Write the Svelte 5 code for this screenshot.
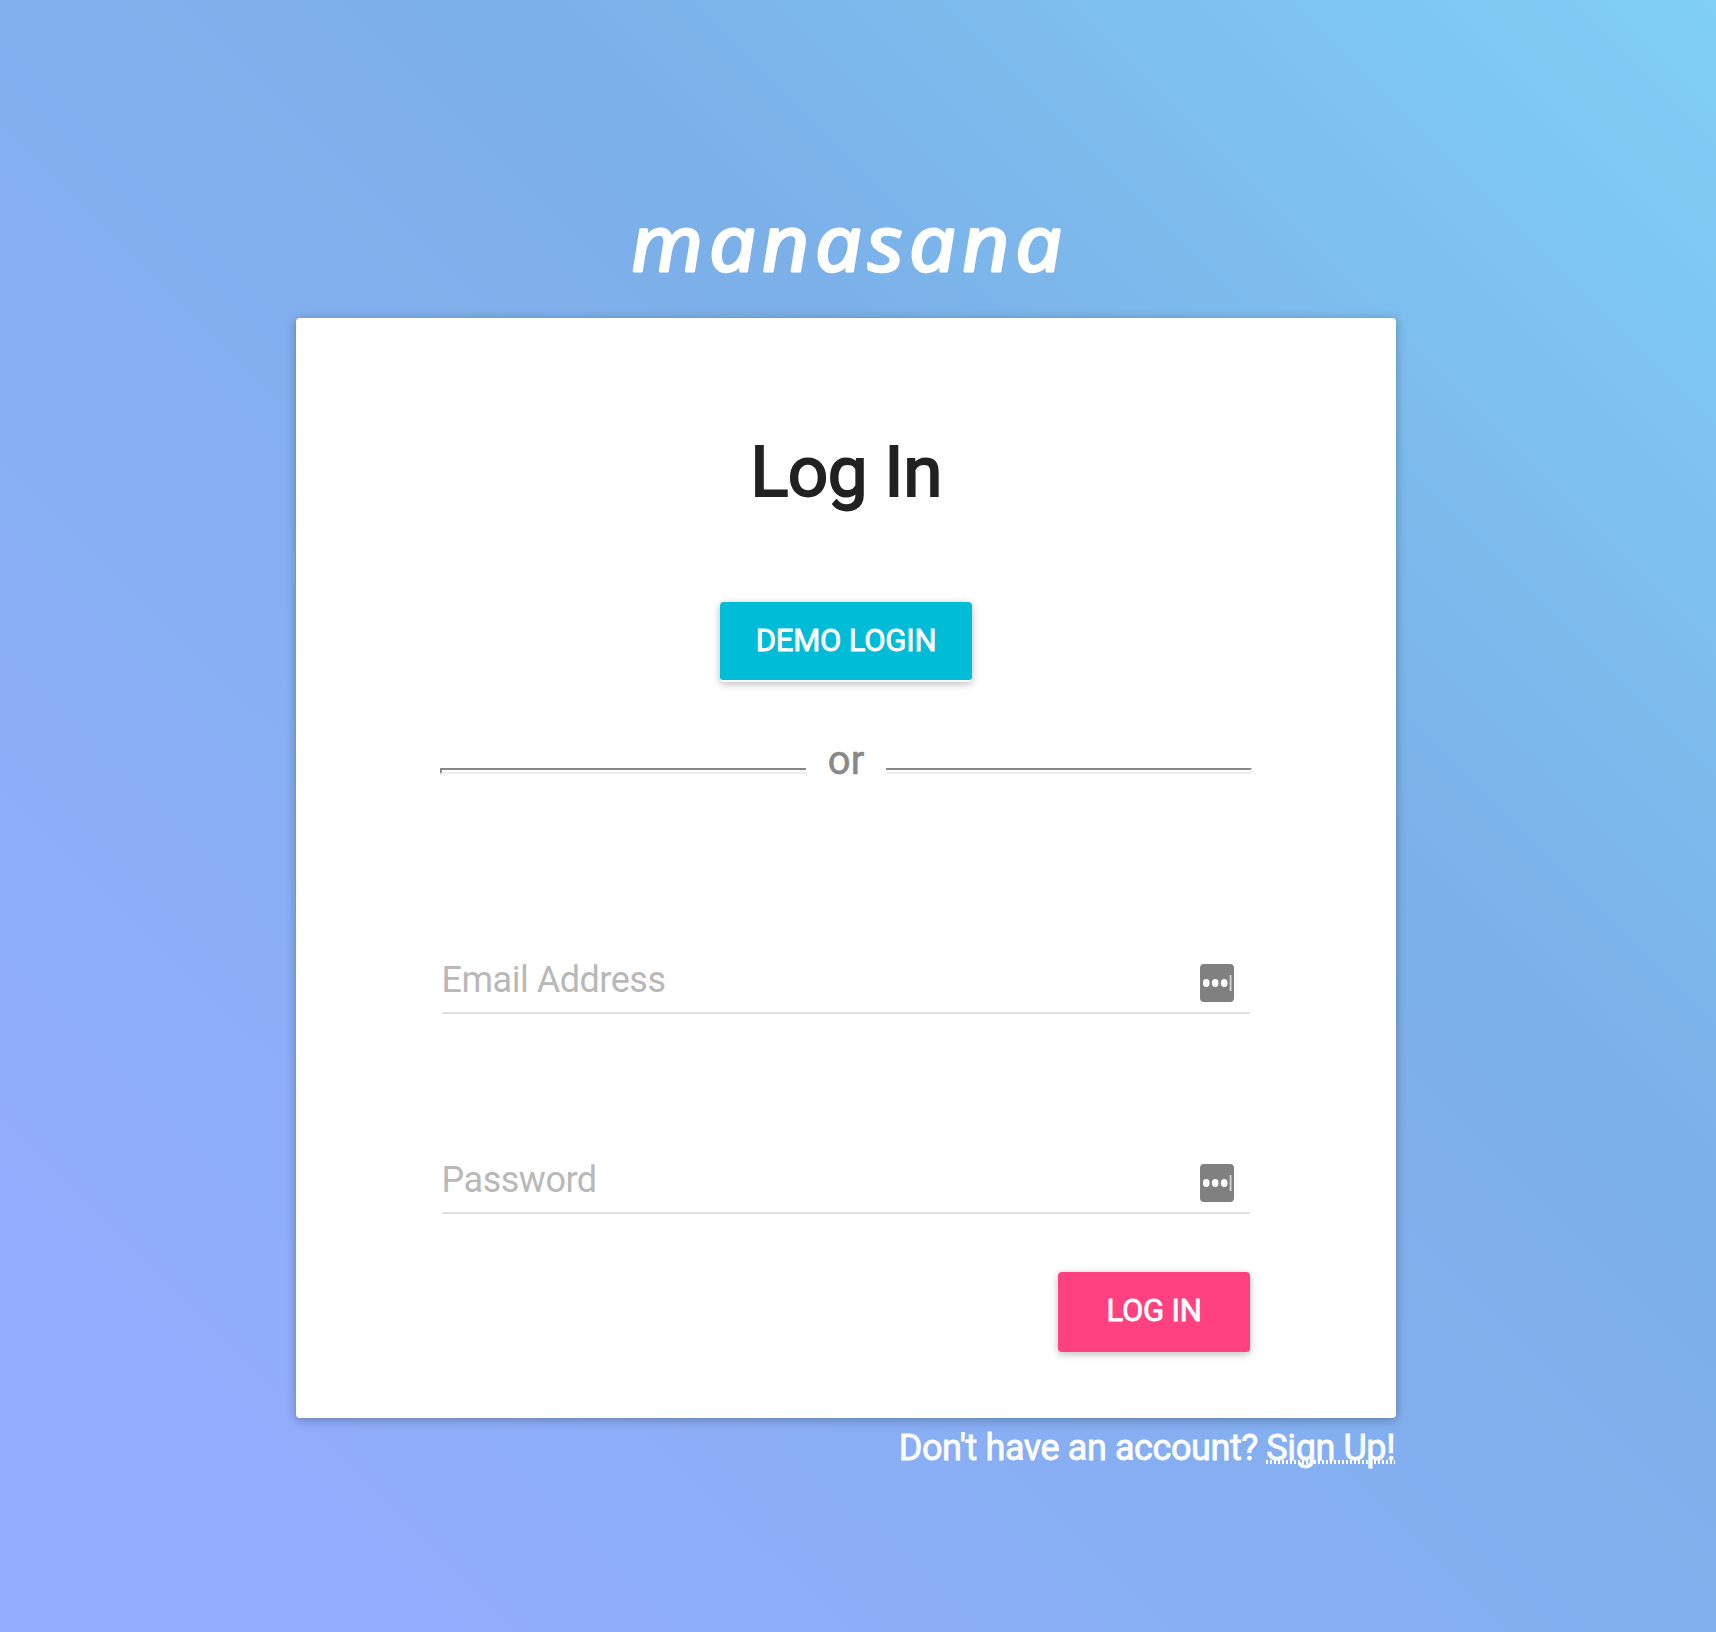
<script>
  let email = $state('');
  let password = $state('');
</script>

{#snippet keyIcon()}
  <svg class="key" viewBox="0 0 34 38" width="34" height="38" aria-hidden="true">
    <rect width="34" height="38" rx="4" fill="#808080" />
    <ellipse cx="6.2" cy="19" rx="3.3" ry="4" fill="#fff" />
    <ellipse cx="15.2" cy="19" rx="3.3" ry="4" fill="#fff" />
    <ellipse cx="24.2" cy="19" rx="3.3" ry="4" fill="#fff" />
    <rect x="29.7" y="11" width="1.8" height="16" fill="#d4d4d4" />
  </svg>
{/snippet}

<main class="page">
  <div class="logo">
    <svg viewBox="0 0 460 130" width="460" height="130">
      <text transform="translate(16 93) skewX(4)" textLength="437" lengthAdjust="spacingAndGlyphs">manasana</text>
    </svg>
  </div>
  <form class="card" onsubmit={(e) => e.preventDefault()}>
    <h1>Log In</h1>
    <button type="button" class="btn demo">DEMO LOGIN</button>
    <div class="divider">
      <span class="rule left"></span>
      <span class="or">or</span>
      <span class="rule right"></span>
    </div>
    <label class="field email">
      <input type="text" placeholder="Email Address" bind:value={email} />
      {@render keyIcon()}
    </label>
    <label class="field password">
      <input type="password" placeholder="Password" bind:value={password} />
      {@render keyIcon()}
    </label>
    <button type="submit" class="btn submit">LOG IN</button>
  </form>
  <p class="signup">Don't have an account? <a href="#signup">Sign Up!</a></p>
</main>

<style>
  .page {
    box-sizing: border-box;
    width: 1716px;
    height: 1632px;
    padding: 0 320px 0 296px;
    overflow: hidden;
    display: flex;
    flex-direction: column;
    font-family: Roboto, sans-serif;
    background: linear-gradient(45deg, #94adff 0%, #94adff 9%, #7bb0e8 64%, #80cff6 100%);
  }
  .logo {
    flex: none;
    box-sizing: border-box;
    height: 318px;
    padding-top: 178px;
    display: flex;
    justify-content: center;
    align-items: flex-start;
  }
  .logo text {
    font: italic 400 77px 'Open Sans', sans-serif;
    letter-spacing: 5px;
    fill: #fff;
    stroke: #fff;
    stroke-width: 3px;
    stroke-linejoin: round;
  }
  .card {
    box-sizing: border-box;
    flex: none;
    width: 1100px;
    height: 1100px;
    padding: 106px 144px 0;
    display: flex;
    flex-direction: column;
    background: #fff;
    border-radius: 4px;
    box-shadow: 0 2px 12px rgba(0, 0, 0, 0.18), 0 2px 8px rgba(0, 0, 0, 0.12);
  }
  h1 {
    margin: 0;
    text-align: center;
    font-size: 71px;
    font-weight: 400;
    line-height: 96px;
    letter-spacing: -0.5px;
    color: #212121;
    -webkit-text-stroke: 2px #212121;
  }
  .btn {
    box-sizing: border-box;
    height: 80px;
    padding: 0;
    border: 0;
    border-radius: 4px;
    font: 400 31px/78px Roboto, sans-serif;
    letter-spacing: -0.2px;
    color: #fff;
    -webkit-text-stroke: 0.8px #fff;
    box-shadow: 0 2px 10px rgba(0, 0, 0, 0.16), 0 2px 6px rgba(0, 0, 0, 0.12);
  }
  .demo {
    align-self: center;
    width: 252px;
    margin-top: 82px;
    border-bottom: 2px solid #fff;
    background: #00bcd7;
    background-clip: padding-box;
  }
  .divider {
    display: flex;
    justify-content: space-between;
    margin-top: 54px;
    height: 50px;
  }
  .rule {
    box-sizing: border-box;
    width: 366px;
    height: 6px;
    margin-top: 32px;
    border: 0 solid;
    border-top: 2px solid #888;
    border-bottom: 2px solid #eee;
  }
  .rule.left {
    border-left: 2px solid #888;
  }
  .rule.right {
    border-right: 2px solid #eee;
  }
  .or {
    font-size: 40px;
    line-height: 50px;
    color: #888;
    -webkit-text-stroke: 0.6px #888;
  }
  .field {
    box-sizing: border-box;
    display: flex;
    align-items: flex-start;
    width: 808px;
    height: 60px;
    margin-left: 2px;
    border-bottom: 2px solid #e0e0e0;
  }
  .email {
    margin-top: 168px;
  }
  .password {
    margin-top: 140px;
  }
  input {
    flex: 1;
    min-width: 0;
    height: 52px;
    padding: 0;
    border: 0;
    outline: 0;
    background: transparent;
    font: 400 36px/52px Roboto, sans-serif;
    letter-spacing: -0.48px;
    text-indent: -0.5px;
    color: #212121;
  }
  input::placeholder {
    color: #b8b8b8;
    opacity: 1;
  }
  .key {
    flex: none;
    margin: 10px 16px 0 0;
  }
  .submit {
    align-self: flex-end;
    width: 192px;
    margin: 58px 2px 0 0;
    padding-bottom: 2px;
    background: #ff4081;
  }
  .signup {
    margin: 8px 1px 0 0;
    text-align: right;
    font-size: 36px;
    line-height: 44px;
    letter-spacing: -0.42px;
    color: #fff;
    -webkit-text-stroke: 0.8px #fff;
    white-space: nowrap;
  }
  .signup a {
    display: inline-block;
    color: #fafafa;
    text-decoration: none;
    background: repeating-linear-gradient(90deg, #fff 0 2px, transparent 2px 4px) 0 34px / 100% 4px no-repeat;
  }
</style>
